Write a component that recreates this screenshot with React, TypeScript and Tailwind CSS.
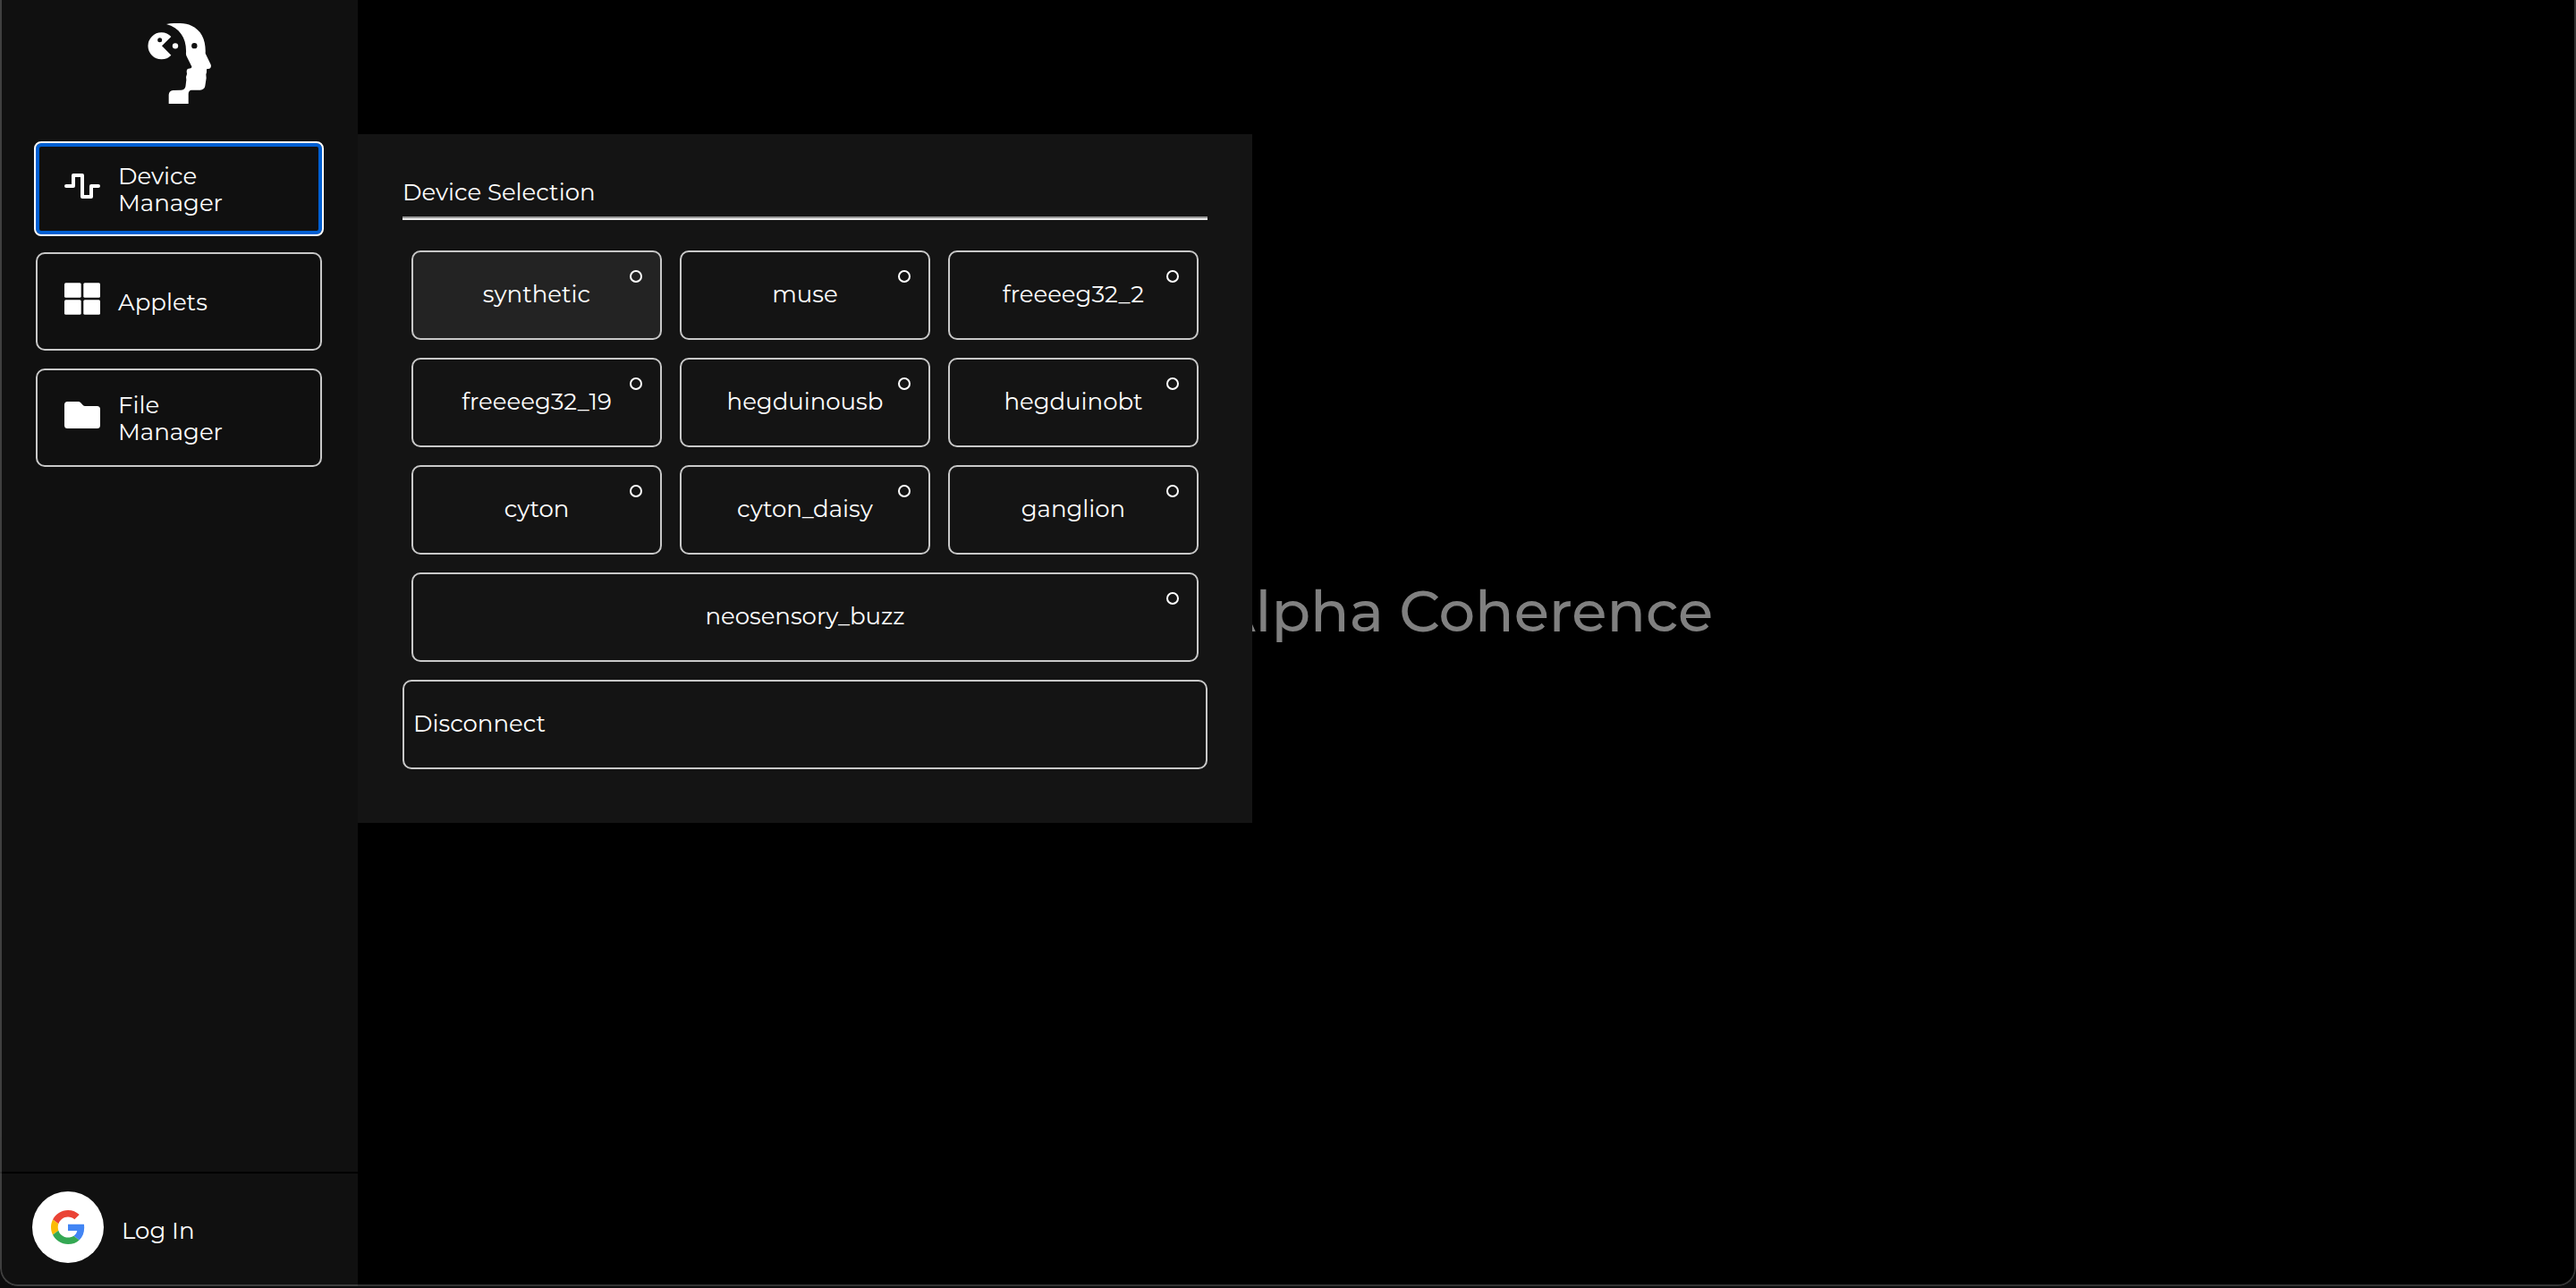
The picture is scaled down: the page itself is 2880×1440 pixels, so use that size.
import type { ReactNode } from "react";

function BrainLogo() {
  return (
    <svg viewBox="72 78 219 270" className="h-[90px] w-[73px]" fill="#fff" aria-label="Logo" role="img">
      <path d="M123 154 154 123A45 45 0 1 0 154 185Z" />
      <circle cx="116" cy="134" r="7.500" fill="#101010" />
      <circle cx="168" cy="154" r="9.500" />
      <path d="M138 81C165 76 200 76 222 86C256 102 271 134 269 179L287 217Q290 227 283 230L273 232L273 242L271 250L272 262L268 288Q266 301 251 302L221 302Q212 304 212 315V348H146V318Q147 304 160 303L188 302Q203 300 203 284L205 268L204 258L207 248L206 240Q206 231 213 230L220 229Q225 226 222 221L206 189Q203 183 204 176C206 130 184 93 138 81Z" />
      <circle cx="232" cy="153.500" r="9.500" fill="#101010" />
    </svg>
  );
}

function WaveIcon() {
  return (
    <svg viewBox="0 0 40 28" className="h-7 w-10" fill="none" stroke="#fff" strokeWidth="4" strokeLinecap="round" strokeLinejoin="round">
      <path d="M2 14H10V2H20V26H30V14H38" />
    </svg>
  );
}

function GridIcon() {
  return (
    <svg viewBox="0 0 40 36" className="h-9 w-10" fill="#fff">
      <rect x="0" y="0.300" width="18.700" height="16.500" rx="1.500" />
      <rect x="21.300" y="0.300" width="18.700" height="16.500" rx="1.500" />
      <rect x="0" y="19.200" width="18.700" height="16.500" rx="1.500" />
      <rect x="21.300" y="19.200" width="18.700" height="16.500" rx="1.500" />
    </svg>
  );
}

function FolderIcon() {
  return (
    <svg viewBox="0 0 40 30" className="h-[30px] w-10" fill="#fff">
      <path d="M3.500 0H15.500Q17 0 18 1L21 4.200Q21.800 5 23 5H36.500Q40 5 40 8.500V26.500Q40 30 36.500 30H3.500Q0 30 0 26.500V3.500Q0 0 3.500 0Z" />
    </svg>
  );
}

function GoogleIcon() {
  return (
    <svg viewBox="0 0 48 48" className="size-[38px]">
      <path fill="#EA4335" d="M24 9.500c3.540 0 6.710 1.220 9.210 3.600l6.850-6.850C35.900 2.380 30.470 0 24 0 14.620 0 6.510 5.380 2.560 13.220l7.980 6.190C12.430 13.720 17.740 9.500 24 9.500z" />
      <path fill="#4285F4" d="M46.980 24.550c0-1.570-.15-3.090-.38-4.550H24v9.020h12.940c-.58 2.960-2.260 5.480-4.780 7.180l7.730 6c4.510-4.180 7.090-10.360 7.090-17.650z" />
      <path fill="#FBBC05" d="M10.530 28.590c-.48-1.450-.76-2.990-.76-4.590s.27-3.140.76-4.590l-7.980-6.190C.92 16.460 0 20.120 0 24c0 3.880.92 7.540 2.560 10.780l7.970-6.190z" />
      <path fill="#34A853" d="M24 48c6.480 0 11.930-2.130 15.890-5.810l-7.730-6c-2.150 1.450-4.920 2.300-8.160 2.300-6.260 0-11.570-4.220-13.470-9.910l-7.980 6.190C6.510 42.620 14.620 48 24 48z" />
    </svg>
  );
}

function NavButton({ icon, label, focused = false }: { icon: ReactNode; label: string; focused?: boolean }) {
  return (
    <button
      type="button"
      className={
        "flex w-full items-center gap-5 rounded-[10px] text-left leading-[30px] " +
        (focused
          ? "h-[102px] rounded-md border-4 border-[#005fd2] px-7 outline-2 outline-white"
          : "h-[110px] border-2 border-[#c8c8c8] px-[30px]")
      }
    >
      <span className="shrink-0 pb-1.5">{icon}</span>
      <span className="w-[130px] pt-0.5">{label}</span>
    </button>
  );
}

const devices = [
  "synthetic",
  "muse",
  "freeeeg32_2",
  "freeeeg32_19",
  "hegduinousb",
  "hegduinobt",
  "cyton",
  "cyton_daisy",
  "ganglion",
  "neosensory_buzz",
];

function DeviceButton({ name }: { name: string }) {
  return (
    <button
      type="button"
      className={
        "relative h-[100px] rounded-[10px] border-2 border-[#c8c8c8] pb-0.5 text-center " +
        (name === "synthetic" ? "bg-[#232323] " : "") +
        (name === "neosensory_buzz" ? "col-span-3" : "")
      }
    >
      {name}
      <span className="absolute top-5 right-5 size-3.5 rounded-full border-2 border-white" />
    </button>
  );
}

export default function App() {
  return (
    <div className="h-screen bg-[#0c0c0d] pb-0.5 font-['Montserrat','Inter',sans-serif] text-[26px] leading-[30px] text-white">
      <div className="relative flex h-full overflow-hidden rounded-b-[20px] bg-black">
        <aside className="flex w-[400px] shrink-0 flex-col bg-[#101010]">
          <div className="flex h-40 shrink-0 justify-center pt-[26px]">
            <BrainLogo />
          </div>
          <nav className="flex flex-1 flex-col gap-5 px-10">
            <NavButton icon={<WaveIcon />} label="Device Manager" focused />
            <NavButton icon={<GridIcon />} label="Applets" />
            <NavButton icon={<FolderIcon />} label="File Manager" />
          </nav>
          <button type="button" className="flex h-32 items-center gap-5 border-t-2 border-black pr-10 pb-1.5 pl-9 text-left">
            <span className="flex size-20 items-center justify-center rounded-full bg-white">
              <GoogleIcon />
            </span>
            <span className="pt-2">Log In</span>
          </button>
        </aside>

        <main className="relative flex flex-1 items-center justify-center pr-2 pb-[72px]">
          <h1 className="text-[64px] leading-[80px] font-medium text-[#808080]">Alpha Coherence</h1>

          <section className="absolute top-[150px] left-0 w-[1000px] bg-[#141414] px-[50px] pt-[50px] pb-[60px]">
            <h2 className="pb-3">Device Selection</h2>
            <hr className="border-t-2 border-b-2 border-t-[#9a9a9a] border-b-[#eeeeee]" />
            <div className="grid grid-cols-3 gap-5 px-2.5 pt-[34px] pb-5">
              {devices.map((name) => (
                <DeviceButton key={name} name={name} />
              ))}
            </div>
            <button type="button" className="h-[100px] w-full rounded-[10px] border-2 border-[#c8c8c8] px-2.5 pb-0.5 text-left">
              Disconnect
            </button>
          </section>
        </main>

        <div className="pointer-events-none absolute inset-0 rounded-b-[20px] border-x-2 border-b-2 border-white/20" />
      </div>
    </div>
  );
}
